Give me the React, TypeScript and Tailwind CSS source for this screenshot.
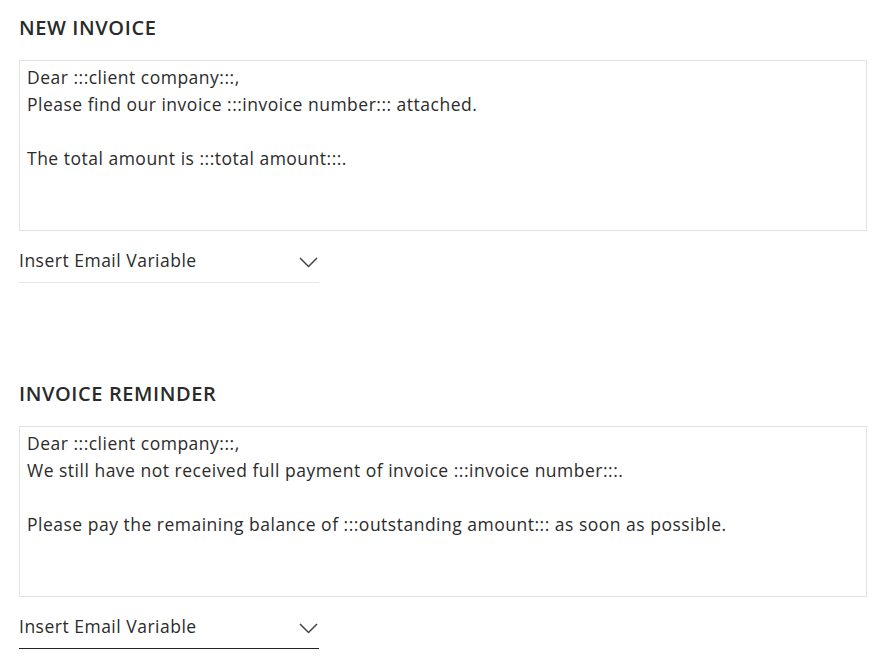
type Section = {
  title: string;
  body: string;
  active?: boolean;
};

const sections: Section[] = [
  {
    title: "NEW INVOICE",
    body: "Dear :::client company:::,\nPlease find our invoice :::invoice number::: attached.\n\nThe total amount is :::total amount:::.",
  },
  {
    title: "INVOICE REMINDER",
    body: "Dear :::client company:::,\nWe still have not received full payment of invoice :::invoice number:::.\n\nPlease pay the remaining balance of :::outstanding amount::: as soon as possible.",
    active: true,
  },
];

function Chevron() {
  return (
    <svg width="19" height="11" viewBox="0 0 19 11" className="mr-[1px] mt-[4px]">
      <polyline points="1,1 9.5,9.5 18,1" fill="none" stroke="#444" strokeWidth="1.5" />
    </svg>
  );
}

function EmailTemplate({ s }: { s: Section }) {
  return (
    <div className="flex flex-col">
      {/* HEADING */}
      <h2 className="mt-[18px] h-[20px] text-[20px] font-semibold leading-none tracking-[0.6px] text-[#2a2a2a]">
        {s.title}
      </h2>

      {/* BODY */}
      <textarea
        className="mt-[22px] h-[171px] w-[848px] resize-none border border-[#e2e2e2] px-[7px] pt-[3px] text-[17.5px] leading-[27px] tracking-[0.5px] text-[#2b2b2b] outline-none"
        defaultValue={s.body}
      />

      {/* VARIABLE SELECT */}
      <div
        className={
          "mt-[11px] flex h-[41px] w-[300px] items-center justify-between border-b pb-[4px] " +
          (s.active ? "border-[#222]" : "border-[#e6e6e6]")
        }
      >
        <span className="text-[17.5px] tracking-[0.5px] text-[#2b2b2b]">Insert Email Variable</span>
        <Chevron />
      </div>
    </div>
  );
}

export default function App() {
  return (
    <main
      className="min-h-screen bg-white pl-[19px]"
      style={{ fontFamily: "'Open Sans', 'Liberation Sans', sans-serif" }}
    >
      <div className="flex flex-col">
        <EmailTemplate s={sections[0]} />
        <div className="h-[83px]" />
        <EmailTemplate s={sections[1]} />
      </div>
    </main>
  );
}
